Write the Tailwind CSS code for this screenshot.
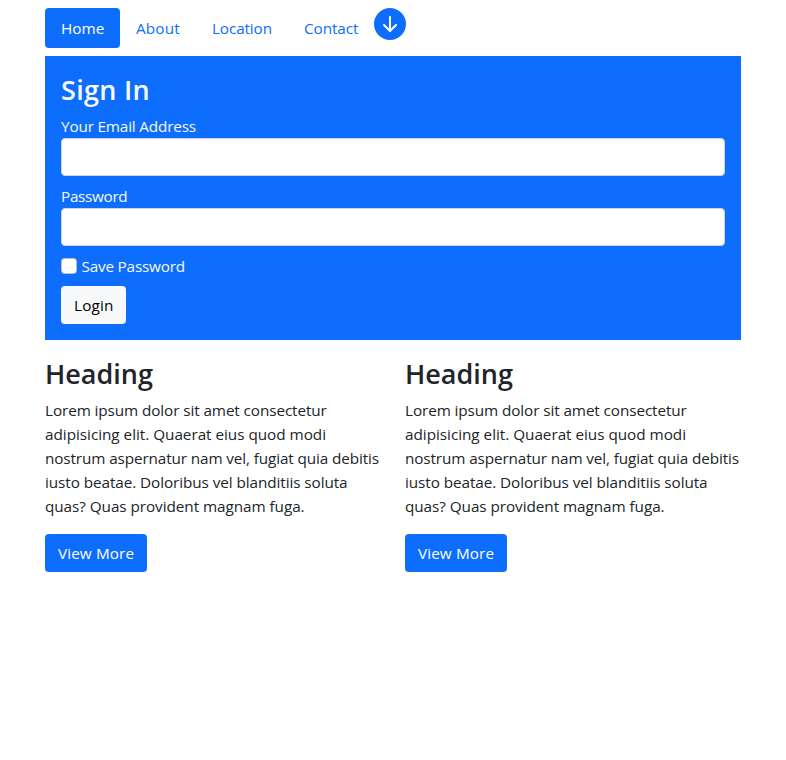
<!DOCTYPE html>
<html lang="en">
<head>
<meta charset="utf-8">
<title>Sign In</title>
<script src="https://cdn.jsdelivr.net/npm/@tailwindcss/browser@4"></script>
</head>
<body class="bg-white font-['Open_Sans','Noto_Sans',sans-serif] text-[15.3px] leading-6 text-[#212529]">
<div class="mx-auto w-[696px] pt-2">
  <nav class="flex h-12 items-start text-[#0d6efd]">
    <a href="#" class="h-10 w-[75px] rounded bg-[#0d6efd] py-2 pl-4 whitespace-nowrap text-white">Home</a>
    <a href="#" class="h-10 w-[76px] py-2 pl-4 tracking-[0.15px] whitespace-nowrap">About</a>
    <a href="#" class="h-10 w-[92px] py-2 pl-4 tracking-[-0.12px] whitespace-nowrap">Location</a>
    <a href="#" class="h-10 w-[86px] py-2 pl-4 tracking-[-0.1px] whitespace-nowrap">Contact</a>
    <svg width="32" height="32" viewBox="0 0 16 16" fill="currentColor"><path d="M16 8A8 8 0 1 1 0 8a8 8 0 0 1 16 0zM8.500 4.500a.5.5 0 0 0-1 0v5.793L5.354 8.146a.5.5 0 1 0-.708.708l3 3a.5.5 0 0 0 .708 0l3-3a.5.5 0 0 0-.708-.708L8.500 10.293V4.500z"/></svg>
  </nav>
  <form class="flex h-[284px] flex-col items-start bg-[#0d6efd] p-4 text-[#f8f9fa]">
    <h3 class="mb-2 h-[34px] text-[27px] leading-9 font-semibold tracking-[0.3px]">Sign In</h3>
    <label for="email" class="tracking-[-0.17px]">Your Email Address</label>
    <input id="email" type="email" class="mb-2 h-[38px] w-full rounded border border-[#ced4da] bg-white px-3 text-[#212529]">
    <label for="pw" class="tracking-[-0.32px]">Password</label>
    <input id="pw" type="password" class="mb-2 h-[38px] w-full rounded border border-[#ced4da] bg-white px-3 text-[#212529]">
    <label class="mb-2 flex h-6 items-center tracking-[-0.2px]"><input type="checkbox" class="mr-[4.5px] size-4 appearance-none rounded border border-black/25 bg-white">Save Password</label>
    <button type="button" class="h-[38px] w-[65px] rounded bg-[#f8f9fa] pl-[13px] text-left tracking-[0.15px] text-black">Login</button>
  </form>
  <div class="grid grid-cols-2 gap-6 pt-4">
    <section>
      <h3 class="mb-2 h-[34px] text-[27px] leading-9 font-semibold">Heading</h3>
      <p class="mb-4 whitespace-nowrap"><span class="tracking-[-0.1px]">Lorem ipsum dolor sit amet consectetur</span><br><span class="tracking-[-0.03px]">adipisicing elit. Quaerat eius quod modi</span><br><span class="tracking-[-0.12px]">nostrum aspernatur nam vel, fugiat quia debitis</span><br><span class="tracking-[-0.08px]">iusto beatae. Doloribus vel blanditiis soluta</span><br><span class="tracking-[-0.06px]">quas? Quas provident magnam fuga.</span></p>
      <button type="button" class="h-[38px] w-[102px] rounded bg-[#0d6efd] pl-[13px] text-left tracking-[0.1px] whitespace-nowrap text-white">View More</button>
    </section>
    <section>
      <h3 class="mb-2 h-[34px] text-[27px] leading-9 font-semibold">Heading</h3>
      <p class="mb-4 whitespace-nowrap"><span class="tracking-[-0.1px]">Lorem ipsum dolor sit amet consectetur</span><br><span class="tracking-[-0.03px]">adipisicing elit. Quaerat eius quod modi</span><br><span class="tracking-[-0.12px]">nostrum aspernatur nam vel, fugiat quia debitis</span><br><span class="tracking-[-0.08px]">iusto beatae. Doloribus vel blanditiis soluta</span><br><span class="tracking-[-0.06px]">quas? Quas provident magnam fuga.</span></p>
      <button type="button" class="h-[38px] w-[102px] rounded bg-[#0d6efd] pl-[13px] text-left tracking-[0.1px] whitespace-nowrap text-white">View More</button>
    </section>
  </div>
</div>
</body>
</html>
